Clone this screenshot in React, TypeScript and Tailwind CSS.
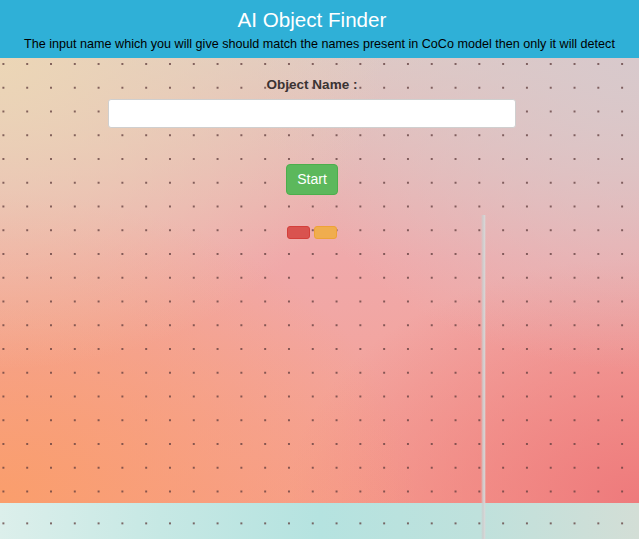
import { useState } from 'react'

const DOTS =
    'bg-[radial-gradient(circle,rgba(95,60,60,0.75)_0.9px,transparent_1.4px)] bg-[size:23.8px_23.75px]'

export default function App() {
    const [objectName, setObjectName] = useState('')

    return (
        <div className="relative flex flex-col w-full h-[539px] overflow-hidden font-['Liberation_Sans',Arial,sans-serif]">
            <header className="h-[58px] bg-[#2fb0d7] flex flex-col items-center pt-[8px]">
                <h1 className="pr-[15px] text-white text-[20.6px] leading-[24px]">AI Object Finder</h1>
                <p className="mt-[4px] text-black text-[12.6px] leading-[16px] whitespace-nowrap">
                    The input name which you will give should match the names present in CoCo model then only it will detect
                </p>
            </header>

            <main className="relative flex-1 bg-[#f2a8a8] bg-[radial-gradient(ellipse_60%_70%_at_0%_0%,rgba(236,214,182,1),rgba(236,214,182,0)),radial-gradient(ellipse_60%_70%_at_100%_0%,rgba(216,201,204,1),rgba(216,201,204,0)),radial-gradient(ellipse_65%_70%_at_0%_100%,rgba(250,158,108,1),rgba(250,158,108,0)),radial-gradient(ellipse_55%_55%_at_100%_100%,rgba(238,122,124,1),rgba(238,122,124,0)),linear-gradient(to_bottom,#e0c8c2_0%,#f0a9aa_45%,#f69f90_100%)]">
                <div className={`absolute inset-0 pointer-events-none ${DOTS} bg-[position:-8.5px_-5.9px]`} />

                <div className="relative flex flex-col items-center pt-[18px] pr-[15px]">
                    <label className="text-[13.5px] leading-[18px] font-bold text-[#3a3333]">Object Name :</label>
                    <input
                        value={objectName}
                        onChange={(e) => setObjectName(e.target.value)}
                        className="mt-[5px] w-[408px] h-[29px] bg-white border border-[#cfcfcf] rounded-[3px] px-2 text-[13px] focus:outline-none"
                    />
                    <button className="mt-[36px] w-[52px] h-[31px] bg-[#5cb85c] border border-[#4cae4c] rounded-[4px] text-white text-[14px]">
                        Start
                    </button>
                    <div className="mt-[31px] flex gap-[4px]">
                        <button className="w-[23px] h-[13px] bg-[#d9534f] border border-[#d43f3a] rounded-[3px]" />
                        <button className="w-[23px] h-[13px] bg-[#f0ad4e] border border-[#eea236] rounded-[3px]" />
                    </div>
                </div>
            </main>

            <footer className="relative h-[36px] bg-[linear-gradient(to_right,#dcefeb_0%,#c6e8e4_25%,#b5e3e0_50%,#bfe1dc_75%,#d3ded6_100%)]">
                <div className={`absolute inset-0 ${DOTS} bg-[position:-8.5px_8.5px]`} />
            </footer>

            <div className="absolute left-[481px] top-[215px] bottom-0 w-[5px] bg-[linear-gradient(to_right,rgba(200,200,200,0),rgba(205,205,205,0.95)_40%,rgba(215,215,215,0.9)_70%,rgba(220,220,220,0))]" />
        </div>
    )
}
